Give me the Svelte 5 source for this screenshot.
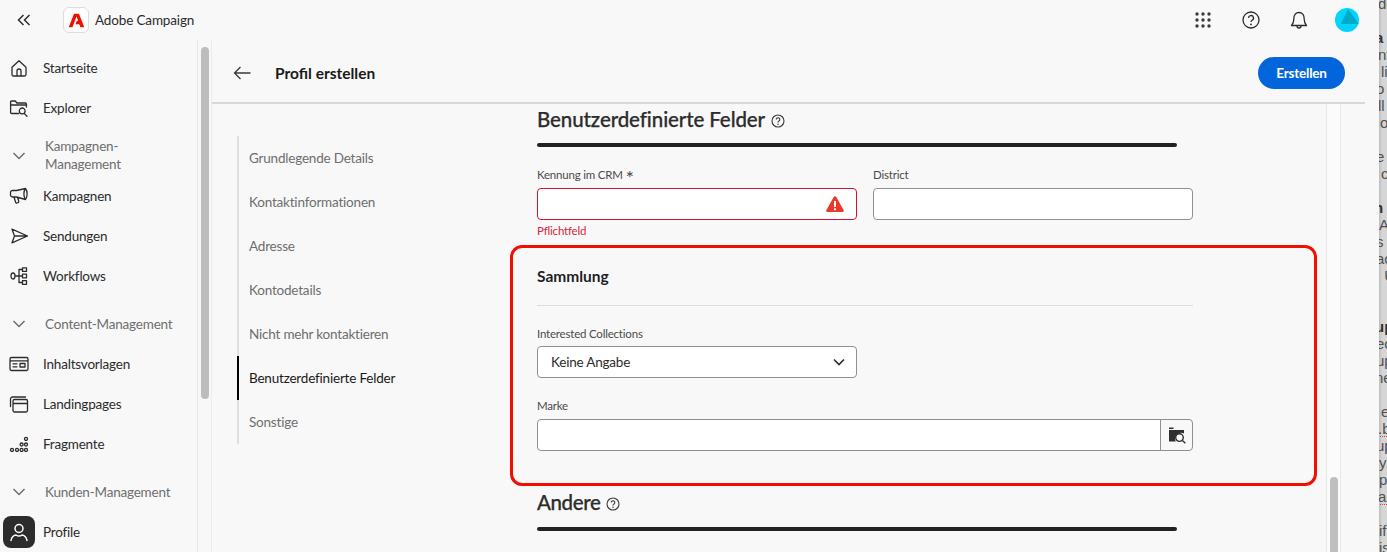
<script>
  const icons = {
    home: 'M3 9.200 10 2.800l7 6.400v7.300a1.500 1.500 0 0 1-1.500 1.500h-11A1.500 1.500 0 0 1 3 16.500ZM8 18v-5a2 2 0 0 1 4 0v5',
    explorer: 'M9.500 15.500H2.600a1 1 0 0 1-1-1V4a1 1 0 0 1 1-1h3.700l1.600 2h8.500a1 1 0 0 1 1 1v3M1.600 7h16M13.200 10a2.900 2.900 0 1 1 0 5.800 2.900 2.900 0 0 1 0-5.800ZM15.400 15.600l2.600 2.700',
    megaphone: 'M16.500 2.500c1 1.200 1.600 3.400 1.600 5.500s-.6 4.200-1.600 5.500L7.500 11H3.500a2 2 0 0 1-2-2V6.500a2 2 0 0 1 2-2h4ZM16.500 2.500c-1 1.200-1.600 3.400-1.600 5.500s.6 4.200 1.600 5.500M5 11l1.600 5.300a1 1 0 0 0 1.300.7l1.200-.4a1 1 0 0 0 .6-1.300L8.600 11.500',
    send: 'M3 3.200 18.500 10 3 16.800 5.500 10ZM5.500 10h13',
    workflow: 'M4 7c1.200 0 2 1.300 2 3s-.8 3-2 3-2-1.300-2-3 .8-3 2-3ZM6 10h7.500M10 3.500v13M10 3.500h3.500M10 16.500h3.500M13.500 1.800h4v3.600h-4ZM13.500 8.200h4v3.600h-4ZM13.500 14.700h4v3.600h-4Z',
    template: 'M2.500 3.500h15a1.500 1.500 0 0 1 1.500 1.500v10a1.500 1.500 0 0 1-1.500 1.500h-15A1.500 1.500 0 0 1 1 15V5a1.500 1.500 0 0 1 1.500-1.500ZM1 6.800h18M4 9.800h4M4 12.800h4M11 9.500h5v3.500h-5Z',
    landing: 'M1.500 12.500V5a2 2 0 0 1 2-2h13M5.500 5.500h11.500a1.500 1.500 0 0 1 1.500 1.500v9.500a1.500 1.500 0 0 1-1.500 1.500H5.500A1.500 1.500 0 0 1 4 16.500V7a1.500 1.500 0 0 1 1.500-1.500ZM4 9.500h14.500',
    fragment: 'M3 14.400a1.500 1.500 0 1 1 0 3 1.500 1.500 0 0 1 0-3ZM8 14.400a1.500 1.500 0 1 1 0 3 1.500 1.500 0 0 1 0-3ZM12.600 14.400a1.500 1.500 0 1 1 0 3 1.500 1.500 0 0 1 0-3ZM17 14.400a1.500 1.500 0 1 1 0 3 1.500 1.500 0 0 1 0-3ZM12.600 9a1.500 1.500 0 1 1 0 3 1.500 1.500 0 0 1 0-3ZM17 9a1.500 1.500 0 1 1 0 3 1.500 1.500 0 0 1 0-3ZM17 3.400a1.500 1.500 0 1 1 0 3 1.500 1.500 0 0 1 0-3Z',
    user: 'M10 2.500a4 4 0 1 1 0 8 4 4 0 0 1 0-8ZM2 18.500c.5-3.500 3-5.500 5-5.500 1 .8 2 1.100 3 1.100s2-.3 3-1.100c2 0 4.500 2 5 5.500'
  };
  const nav = [
    { label: 'Startseite', icon: 'home' },
    { label: 'Explorer', icon: 'explorer' },
    { label: 'Kampagnen-\nManagement', group: true, two: true },
    { label: 'Kampagnen', icon: 'megaphone' },
    { label: 'Sendungen', icon: 'send' },
    { label: 'Workflows', icon: 'workflow' },
    { label: 'Content-Management', group: true },
    { label: 'Inhaltsvorlagen', icon: 'template' },
    { label: 'Landingpages', icon: 'landing' },
    { label: 'Fragmente', icon: 'fragment' },
    { label: 'Kunden-Management', group: true },
    { label: 'Profile', icon: 'user', active: true }
  ];
  const steps = ['Grundlegende Details', 'Kontaktinformationen', 'Adresse', 'Kontodetails', 'Nicht mehr kontaktieren', 'Benutzerdefinierte Felder', 'Sonstige'];
  const behind = [
    ['de', -1, 0, 0], ['', 0, 0, 0], ['a', -4, 1, 0], ['nt', -1, 0, 0], ['li', 2, 0, 0], ['o', -3, 0, 0], ['ll', -1, 0, 0], ['o', 1, 0, 0], ['', 0, 0, 0],
    ['e p', -3, 0, 0], ['c', 2, 0, 0], ['', 0, 0, 0], ['n', -5, 1, 0], ['A', 0, 0, 0], ['s', -3, 0, 0], ['ac', -3, 0, 0], ['. U', -3, 0, 0], ['', 0, 0, 0], ['', 0, 0, 0],
    ['up', -4, 1, 0], ['ec', -3, 0, 0], ['up', -3, 0, 0], ['ne', -4, 0, 0], ['', 0, 0, 0], ['e', 2, 0, 0], ['.b', -1, 0, 1], ['up', -3, 0, 0], ['y.', 0, 0, 0], ['p', 0, 0, 0], ['ar', -1, 0, 1], ['', 0, 0, 0], ['if', 0, 0, 0], ['is', 0, 0, 0]
  ];
</script>

<div class="page">
  <div class="app">
    <header class="topbar">
      <button class="collapse" aria-label="Einklappen">
        <svg viewBox="0 0 14 12" width="14" height="12"><path d="M6.500 1 1.500 6l5 5M12.500 1l-5 5 5 5" /></svg>
      </button>
      <span class="logo">
        <svg viewBox="0 0 24 24" width="17" height="17"><path d="M8.500 2.500h7L23 21.500h-5.500l-1.600-4.300h-5.400l2-4.700h1.900L12 6.500 6.300 21.500H1Z" /></svg>
      </span>
      <span class="product">Adobe Campaign</span>
      <div class="actions">
        <svg class="grid9" viewBox="0 0 16 16" width="16" height="16">
          {#each [2, 8, 14] as y}
            {#each [2, 8, 14] as x}
              <circle cx={x} cy={y} r="1.700" />
            {/each}
          {/each}
        </svg>
        <svg class="help" viewBox="0 0 18 18" width="18" height="18">
          <circle cx="9" cy="9" r="8" />
          <path d="M6.500 7a2.500 2.500 0 1 1 3.700 2.200c-.8.500-1.200.9-1.200 1.800" />
          <circle class="dot" cx="9" cy="13.400" r=".9" />
        </svg>
        <svg class="bell" viewBox="0 0 18 20" width="18" height="20">
          <path d="M1.500 15.500c1.500-1.500 2.300-3 2.300-6.500 0-4 2-6.500 5.200-6.500s5.200 2.500 5.200 6.500c0 3.500.8 5 2.300 6.500ZM7 16c0 1.300.8 2 2 2s2-.7 2-2" />
        </svg>
        <svg class="avatar" viewBox="0 0 24 24" width="24" height="24">
          <circle cx="12" cy="12" r="12" fill="#00d4ff" />
          <path d="M13 1 23.800 16H6Z" fill="#00a9c8" />
        </svg>
      </div>
    </header>

    <div class="shell">
      <nav class="sidebar">
        {#each nav as item}
          {#if item.group}
            <div class="group" class:two={item.two}>
              <svg class="chev" viewBox="0 0 14 8" width="14" height="8"><path d="M1.500 1 7 6.500 12.500 1" /></svg>
              <span>{item.label}</span>
            </div>
          {:else}
            <div class="item">
              <span class="icon" class:active={item.active}>
                <svg viewBox="0 0 20 20" width="20" height="20"><path d={icons[item.icon]} /></svg>
              </span>
              <span>{item.label}</span>
            </div>
          {/if}
        {/each}
      </nav>
      <div class="sidescroll"><div class="sidethumb"></div></div>

      <main class="main">
        <div class="head">
          <svg class="back" viewBox="0 0 18 14" width="18" height="14"><path d="M7.500 1 1.500 7l6 6M1.500 7H17.500" /></svg>
          <h1>Profil erstellen</h1>
          <button class="create">Erstellen</button>
        </div>
        <div class="body">
          <aside class="steps">
            {#each steps as s, i}
              <div class="step" class:current={i === 5}>{s}</div>
            {/each}
          </aside>
          <div class="form">
            <h2 class="first">Benutzerdefinierte Felder
              <svg class="q" viewBox="0 0 14 14" width="14" height="14"><circle cx="7" cy="7" r="6" /><path d="M5.200 5.500a1.800 1.800 0 1 1 2.700 1.600c-.6.300-.9.600-.9 1.300" /><circle class="dot" cx="7" cy="10.300" r=".7" /></svg>
            </h2>
            <div class="rule"></div>
            <div class="row">
              <div class="field">
                <div class="label">Kennung im CRM <span class="star">*</span></div>
                <div class="input invalid">
                  <svg viewBox="0 0 18 16" width="18" height="16"><path class="warn" fill-rule="evenodd" d="M7.700 1 .4 14a1.300 1.300 0 0 0 1.100 2h15a1.300 1.300 0 0 0 1.100-2L10.300 1a1.500 1.500 0 0 0-2.600 0ZM8 5h2v6H8Zm0 7.300h2v2H8Z" /></svg>
                </div>
                <div class="error">Pflichtfeld</div>
              </div>
              <div class="field">
                <div class="label">District</div>
                <div class="input"></div>
              </div>
            </div>

            <section class="highlight">
              <h3>Sammlung</h3>
              <div class="hr"></div>
              <div class="label l2">Interested Collections</div>
              <div class="input select">
                <span>Keine Angabe</span>
                <svg viewBox="0 0 12 8" width="12" height="8"><path d="M1 1.500 6 6.500l5-5" /></svg>
              </div>
              <div class="label l3">Marke</div>
              <div class="combo">
                <div class="input grow"></div>
                <div class="picker">
                  <svg viewBox="0 0 18 18" width="18" height="18">
                    <path class="solid" d="M1 1.500h4.500v1.500H1ZM1 4h15v3.500a6 6 0 0 0-8.200 8H1Z" />
                    <path class="mag" d="M11.500 7.800a3.800 3.800 0 1 1 0 7.600 3.800 3.800 0 0 1 0-7.600ZM14.300 14.300l3 3" />
                  </svg>
                </div>
              </div>
            </section>

            <h2 class="second">Andere
              <svg class="q" viewBox="0 0 14 14" width="14" height="14"><circle cx="7" cy="7" r="6" /><path d="M5.200 5.500a1.800 1.800 0 1 1 2.700 1.600c-.6.300-.9.600-.9 1.300" /><circle class="dot" cx="7" cy="10.300" r=".7" /></svg>
            </h2>
            <div class="rule"></div>
          </div>
          <div class="track"><div class="thumb"></div></div>
        </div>
      </main>
    </div>
  </div>

  <div class="strip">
    <div class="lines">
      {#each behind as [text, offset, bold, spell]}
        <div class="line" class:bold={bold} class:spell={spell} style="padding-left:{Math.max(offset, 0)}px;margin-left:{Math.min(offset, 0)}px">{text}</div>
      {/each}
    </div>
  </div>
</div>

<style>
  :global(body) { margin: 0; overflow: hidden; background: #f8f8f8; }
  .page {
    display: flex;
    width: 1387px;
    height: 552px;
    overflow: hidden;
    font-family: Lato, "Noto Sans", sans-serif;
    font-size: 13.500px;
    letter-spacing: -.2px;
    color: #2c2c2c;
    background: #f8f8f8;
  }
  .app { width: 1379px; flex: none; display: flex; flex-direction: column; }

  .topbar { height: 40px; flex: none; display: flex; align-items: center; padding-left: 17px; }
  .collapse { all: unset; display: flex; width: 14px; margin-right: 32px; }
  .collapse path { fill: none; stroke: #2c2c2c; stroke-width: 1.500; }
  .logo {
    width: 24px; height: 24px; margin-right: 6px;
    display: flex; align-items: center; justify-content: center;
    background: #fff; border: 1px solid #dcdcdc; border-radius: 6px;
  }
  .logo path { fill: #eb1000; }
  .product { font-size: 13.500px; letter-spacing: -.15px; padding-bottom: 1px; }
  .actions { margin-left: auto; display: flex; align-items: center; padding-right: 20px; }
  .grid9 { margin-right: 31px; }
  .grid9 circle { fill: #3a3a3a; }
  .help { margin-right: 30px; }
  .help circle, .help path { fill: none; stroke: #2c2c2c; stroke-width: 1.300; }
  .help .dot, .q .dot { fill: #2c2c2c; stroke: none; }
  .bell { margin-right: 27px; }
  .bell path { fill: none; stroke: #2c2c2c; stroke-width: 1.300; stroke-linejoin: round; }

  .shell { flex: 1; display: flex; min-height: 0; }
  .sidebar {
    width: 198px; flex: none; box-sizing: border-box; padding-top: 8px;
    border-right: 1px solid #e8e8e8;
  }
  .item { height: 40px; display: flex; align-items: center; }
  .item .icon { width: 32px; height: 32px; margin: 0 8px 0 3px; display: flex; align-items: center; justify-content: center; border-radius: 8px; }
  .item path { fill: none; stroke: #2c2c2c; stroke-width: 1.300; stroke-linejoin: round; stroke-linecap: round; }
  .item .active { background: #2c2c2c; }
  .item .active path { stroke: #fff; stroke-width: 1.500; }
  .group {
    height: 40px; margin-top: 8px; display: flex; align-items: center;
    color: #6e6e6e; line-height: 18px; white-space: pre-line; box-sizing: border-box;
  }
  .group.two { padding-bottom: 2px; }
  .group.two .chev { margin-top: 2px; }
  .chev { margin: 0 19px 0 12px; flex: none; }
  .chev path { fill: none; stroke: #6e6e6e; stroke-width: 1.500; }

  .sidescroll { width: 13px; flex: none; border-right: 1px solid #ececec; }
  .sidethumb { width: 8px; height: 352px; margin: 7px 0 0 3px; border-radius: 4px; background: #bdbdbd; }

  .main { width: 1153px; flex: none; display: flex; flex-direction: column; min-height: 0; }
  .head {
    height: 62px; flex: none; display: flex; align-items: center;
    padding: 2px 20px 0 21px; border-bottom: 2px solid #d8d8d8; margin-top: 2px; box-sizing: border-box;
  }
  .back { margin-right: 24px; }
  .back path { fill: none; stroke: #3a3a3a; stroke-width: 1.300; }
  h1 { margin: 0; font-size: 15.500px; font-weight: 700; letter-spacing: 0; color: #1a1a1a; }
  .create {
    all: unset; margin-left: auto; width: 87px; height: 32px; text-align: center; line-height: 31px;
    border-radius: 16px; background: #0265dc; color: #fff; font-size: 13.500px; font-weight: 700;
  }

  .body { flex: 1; min-height: 0; display: flex; overflow: hidden; }
  .steps {
    width: 300px; flex: none; margin: 32px 0 0 25px; box-sizing: border-box; height: 308px;
    border-left: 2px solid #dedede; color: #6e6e6e;
  }
  .step { height: 44px; line-height: 44px; margin-left: -2px; border-left: 2px solid transparent; padding-left: 10px; }
  .step.current { color: #1a1a1a; border-left-color: #000; }

  .form { width: 656px; flex: none; }
  h2 {
    margin: 0; font-size: 20.500px; font-weight: 500; line-height: 30px; letter-spacing: -.1px;
    color: #2c2c2c; white-space: nowrap; -webkit-text-stroke: .25px #2c2c2c;
  }
  .q { vertical-align: -1px; margin-left: 1px; }
  .q circle, .q path { fill: none; stroke: #3a3a3a; stroke-width: 1.100; }
  .first { margin-top: 0; }
  .rule { width: 640px; height: 4px; border-radius: 2px; background: #222; }
  .first + .rule { margin-top: 9px; }
  .second { margin-top: 1px; letter-spacing: -.4px; }
  .second + .rule { margin-top: 10px; }

  .row { display: flex; gap: 16px; margin-top: 20px; height: 78px; }
  .field { width: 320px; }
  .label { font-size: 11.500px; line-height: 16px; color: #4b4b4b; }
  .star { font-size: 20px; line-height: 0; vertical-align: -6px; }
  .input {
    box-sizing: border-box; height: 32px; margin-top: 5px;
    background: #fff; border: 1px solid #8f8f8f; border-radius: 4px;
    display: flex; align-items: center; justify-content: space-between;
  }
  .invalid { border-color: #d7112d; justify-content: flex-end; padding-right: 12px; }
  .warn { fill: #ea3829; }
  .error { font-size: 11.500px; line-height: 16px; color: #d7253c; margin-top: 3px; }

  .highlight {
    box-sizing: border-box; width: 807px; height: 241px; margin-left: -27px; padding: 19px 24px 0;
    border: 3px solid #f00f00; border-radius: 12px;
  }
  h3 { margin: 0; font-size: 15.500px; font-weight: 700; line-height: 18px; letter-spacing: 0; color: #1f1f1f; }
  .hr { width: 656px; height: 1px; background: #dcdcdc; margin-top: 20px; }
  .l2 { margin-top: 20px; }
  .highlight .input { margin-top: 4px; width: 320px; }
  .select { padding: 0 11px 0 13px; color: #2c2c2c; }
  .select path { fill: none; stroke: #2c2c2c; stroke-width: 1.600; }
  .l3 { margin-top: 20px; }
  .combo { display: flex; width: 656px; margin-top: 5px; }
  .highlight .combo .input { margin-top: 0; flex: 1; width: auto; border-radius: 4px 0 0 4px; }
  .picker {
    box-sizing: border-box; width: 33px; height: 32px; margin-left: -1px;
    display: flex; align-items: center; justify-content: center;
    background: #f8f8f8; border: 1px solid #8f8f8f; border-radius: 0 4px 4px 0;
  }
  .picker .solid { fill: #2f2f2f; }
  .picker .mag { fill: none; stroke: #2f2f2f; stroke-width: 1.400; }

  .track {
    width: 13px; flex: none; margin-left: 133px; background: #fbfbfb;
    border-left: 1px solid #e8e8e8; border-right: 1px solid #e8e8e8; padding-top: 373px;
  }
  .thumb { width: 8px; height: 120px; margin-left: 3px; border-radius: 4px 4px 0 0; background: #bfbfbf; }

  .strip {
    width: 8px; flex: none; overflow: hidden;
    background: linear-gradient(90deg, #bdbdbd, #d6d6d6 40%);
    font-family: "Liberation Sans", sans-serif; font-size: 15px; letter-spacing: 0; color: #505050;
  }
  .lines { margin-top: -5.500px; }
  .line { height: 17px; line-height: 17px; white-space: nowrap; }
  .bold { font-weight: 700; color: #333; }
  .spell { border-bottom: 1px dotted #d6453d; box-sizing: border-box; }
</style>
